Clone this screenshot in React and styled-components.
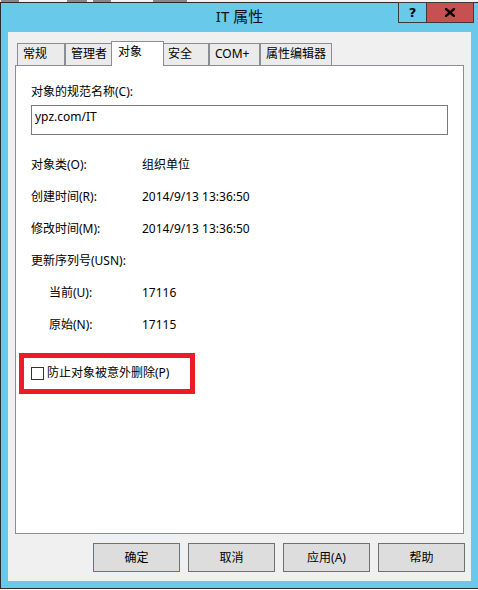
import React from 'react';
import styled, { createGlobalStyle, css } from 'styled-components';

const GlobalStyle = createGlobalStyle`
  html, body { margin: 0; padding: 0; background: #ffffff; }
  body { font-family: "Noto Sans", "Noto Sans CJK SC", sans-serif; color: #000; }
`;

const Screen = styled.div`
  width: 478px;
  height: 590px;
  overflow: hidden;
  background: #ffffff;
  display: flex;
  flex-direction: column;
`;

const Backdrop = styled.div`
  flex: none;
  height: 2px;
  display: flex;
  background: #f2f2f2;
`;

const Fragment = styled.span`
  flex: none;
  height: 2px;
  width: ${p => p.$w}px;
  margin-left: ${p => p.$x}px;
  background: #5a5a5a;
  opacity: 0.7;
`;

const Window = styled.div`
  flex: none;
  width: 479px;
  height: 587px;
  box-sizing: border-box;
  border: 1px solid #2b2b2b;
  background: #68c9ea;
  display: flex;
  flex-direction: column;
`;

const TitleBar = styled.div`
  flex: none;
  height: 29px;
  display: grid;
  grid-template-columns: 1fr auto 1fr;
  align-items: start;
`;

const Title = styled.div`
  grid-column: 2;
  margin-top: 3px;
  font-size: 15px;
  line-height: 20px;
  color: #111;
  white-space: nowrap;
`;

const CaptionButtons = styled.div`
  grid-column: 3;
  justify-self: end;
  margin: -1px 4px 0 0;
  display: flex;
`;

const CaptionButton = styled.div`
  box-sizing: border-box;
  width: ${p => p.$w}px;
  height: 21px;
  border: 1px solid #3b3b3b;
  border-right-width: ${p => (p.$joined ? 0 : 1)}px;
  background: ${p => p.$bg};
  display: flex;
  align-items: center;
  justify-content: center;
  font-family: "DejaVu Sans", sans-serif;
  font-weight: bold;
  font-size: 13px;
  line-height: 13px;
  color: #000;
`;

const Client = styled.div`
  flex: none;
  margin: 0 7px;
  height: 549px;
  box-sizing: border-box;
  padding-top: 9px;
  background: #f0f0f0;
  display: flex;
  flex-direction: column;
`;

const TabStrip = styled.div`
  flex: none;
  height: 24px;
  padding-left: 9px;
  display: flex;
  align-items: flex-end;
  position: relative;
  z-index: 1;
`;

const Tab = styled.div`
  flex: none;
  box-sizing: border-box;
  width: ${p => p.$w}px;
  height: 22px;
  border: 1px solid #8b8d94;
  border-bottom: none;
  background: #ebebeb;
  padding: 2px 0 0 5px;
  font-size: 12px;
  line-height: 16px;
  white-space: nowrap;
  ${p =>
    p.$active &&
    css`
      width: ${p.$w + 4}px;
      height: 25px;
      margin: 0 -2px -1px;
      padding-left: 6px;
      background: #ffffff;
      position: relative;
      z-index: 1;
    `}
`;

const Panel = styled.div`
  flex: none;
  margin: 0 7px;
  height: 469px;
  box-sizing: border-box;
  border: 1px solid #8b8d94;
  background: #ffffff;
  padding: 18px 15px 0;
  display: flex;
  flex-direction: column;
  font-size: 12px;
  line-height: 16px;
`;

const FieldLabel = styled.div`
  white-space: nowrap;
`;

const TextBox = styled.div`
  margin-top: 5px;
  height: 30px;
  box-sizing: border-box;
  border: 1px solid #7a7a7a;
  padding: 3px 3px;
  white-space: nowrap;
`;

const InfoGrid = styled.div`
  margin-top: 22px;
  display: grid;
  grid-template-columns: 111px 1fr;
  row-gap: 16px;
`;

const InfoLabel = styled.div`
  white-space: nowrap;
  padding-left: ${p => (p.$indent ? 18 : 0)}px;
  grid-column: ${p => (p.$wide ? '1 / span 2' : 'auto')};
`;

const InfoValue = styled.div`
  white-space: nowrap;
`;

const CheckRow = styled.div`
  margin-top: 20px;
  margin-left: -12px;
  width: 176px;
  height: 41px;
  box-sizing: border-box;
  border: 5px solid #ed1c24;
  padding: 0 0 1px 7px;
  display: flex;
  align-items: center;
  gap: 3px;
  white-space: nowrap;
`;

const CheckBox = styled.span`
  flex: none;
  width: 13px;
  height: 13px;
  box-sizing: border-box;
  border: 1px solid #333333;
  background: #ffffff;
`;

const ButtonRow = styled.div`
  flex: none;
  margin-top: 9px;
  padding-right: 6px;
  display: flex;
  justify-content: flex-end;
  gap: 8px;
`;

const DialogButton = styled.div`
  flex: none;
  width: 87px;
  height: 29px;
  box-sizing: border-box;
  border: 1px solid ${p => (p.$primary ? '#3c7fb1' : '#707070')};
  background: #dddddd;
  display: flex;
  align-items: center;
  justify-content: center;
  font-size: 12px;
  line-height: 16px;
  white-space: nowrap;
`;

const tabs = [
  { label: '常规', w: 48 },
  { label: '管理者', w: 48 },
  { label: '对象', w: 49, active: true },
  { label: '安全', w: 47 },
  { label: 'COM+', w: 51 },
  { label: '属性编辑器', w: 72 },
];

const info = [
  { label: '对象类(O):', value: '组织单位' },
  { label: '创建时间(R):', value: '2014/9/13 13:36:50' },
  { label: '修改时间(M):', value: '2014/9/13 13:36:50' },
  { label: '更新序列号(USN):', wide: true },
  { label: '当前(U):', value: '17116', indent: true },
  { label: '原始(N):', value: '17115', indent: true },
];

const CloseGlyph = () => (
  <svg width="10" height="9" viewBox="0 0 10 9">
    <path d="M1 1 L9 8 M9 1 L1 8" stroke="#000" strokeWidth="2.4" strokeLinecap="square" fill="none" />
  </svg>
);

export default function App() {
  return (
    <>
      <GlobalStyle />
      <Screen>
        <Backdrop>
          <Fragment $x={1} $w={18} />
          <Fragment $x={48} $w={20} />
          <Fragment $x={6} $w={18} />
          <Fragment $x={42} $w={34} />
        </Backdrop>
        <Window>
          <TitleBar>
            <Title>IT 属性</Title>
            <CaptionButtons>
              <CaptionButton $w={28} $joined $bg="transparent">?</CaptionButton>
              <CaptionButton $w={48} $bg="#c75050">
                <CloseGlyph />
              </CaptionButton>
            </CaptionButtons>
          </TitleBar>
          <Client>
            <TabStrip>
              {tabs.map(t => (
                <Tab key={t.label} $w={t.w} $active={t.active}>
                  {t.label}
                </Tab>
              ))}
            </TabStrip>
            <Panel>
              <FieldLabel>对象的规范名称(C):</FieldLabel>
              <TextBox>ypz.com/IT</TextBox>
              <InfoGrid>
                {info.map(r => (
                  <React.Fragment key={r.label}>
                    <InfoLabel $indent={r.indent} $wide={r.wide}>{r.label}</InfoLabel>
                    {!r.wide && <InfoValue>{r.value}</InfoValue>}
                  </React.Fragment>
                ))}
              </InfoGrid>
              <CheckRow>
                <CheckBox />
                <span>防止对象被意外删除(P)</span>
              </CheckRow>
            </Panel>
            <ButtonRow>
              <DialogButton $primary>确定</DialogButton>
              <DialogButton>取消</DialogButton>
              <DialogButton>应用(A)</DialogButton>
              <DialogButton>帮助</DialogButton>
            </ButtonRow>
          </Client>
        </Window>
      </Screen>
    </>
  );
}
